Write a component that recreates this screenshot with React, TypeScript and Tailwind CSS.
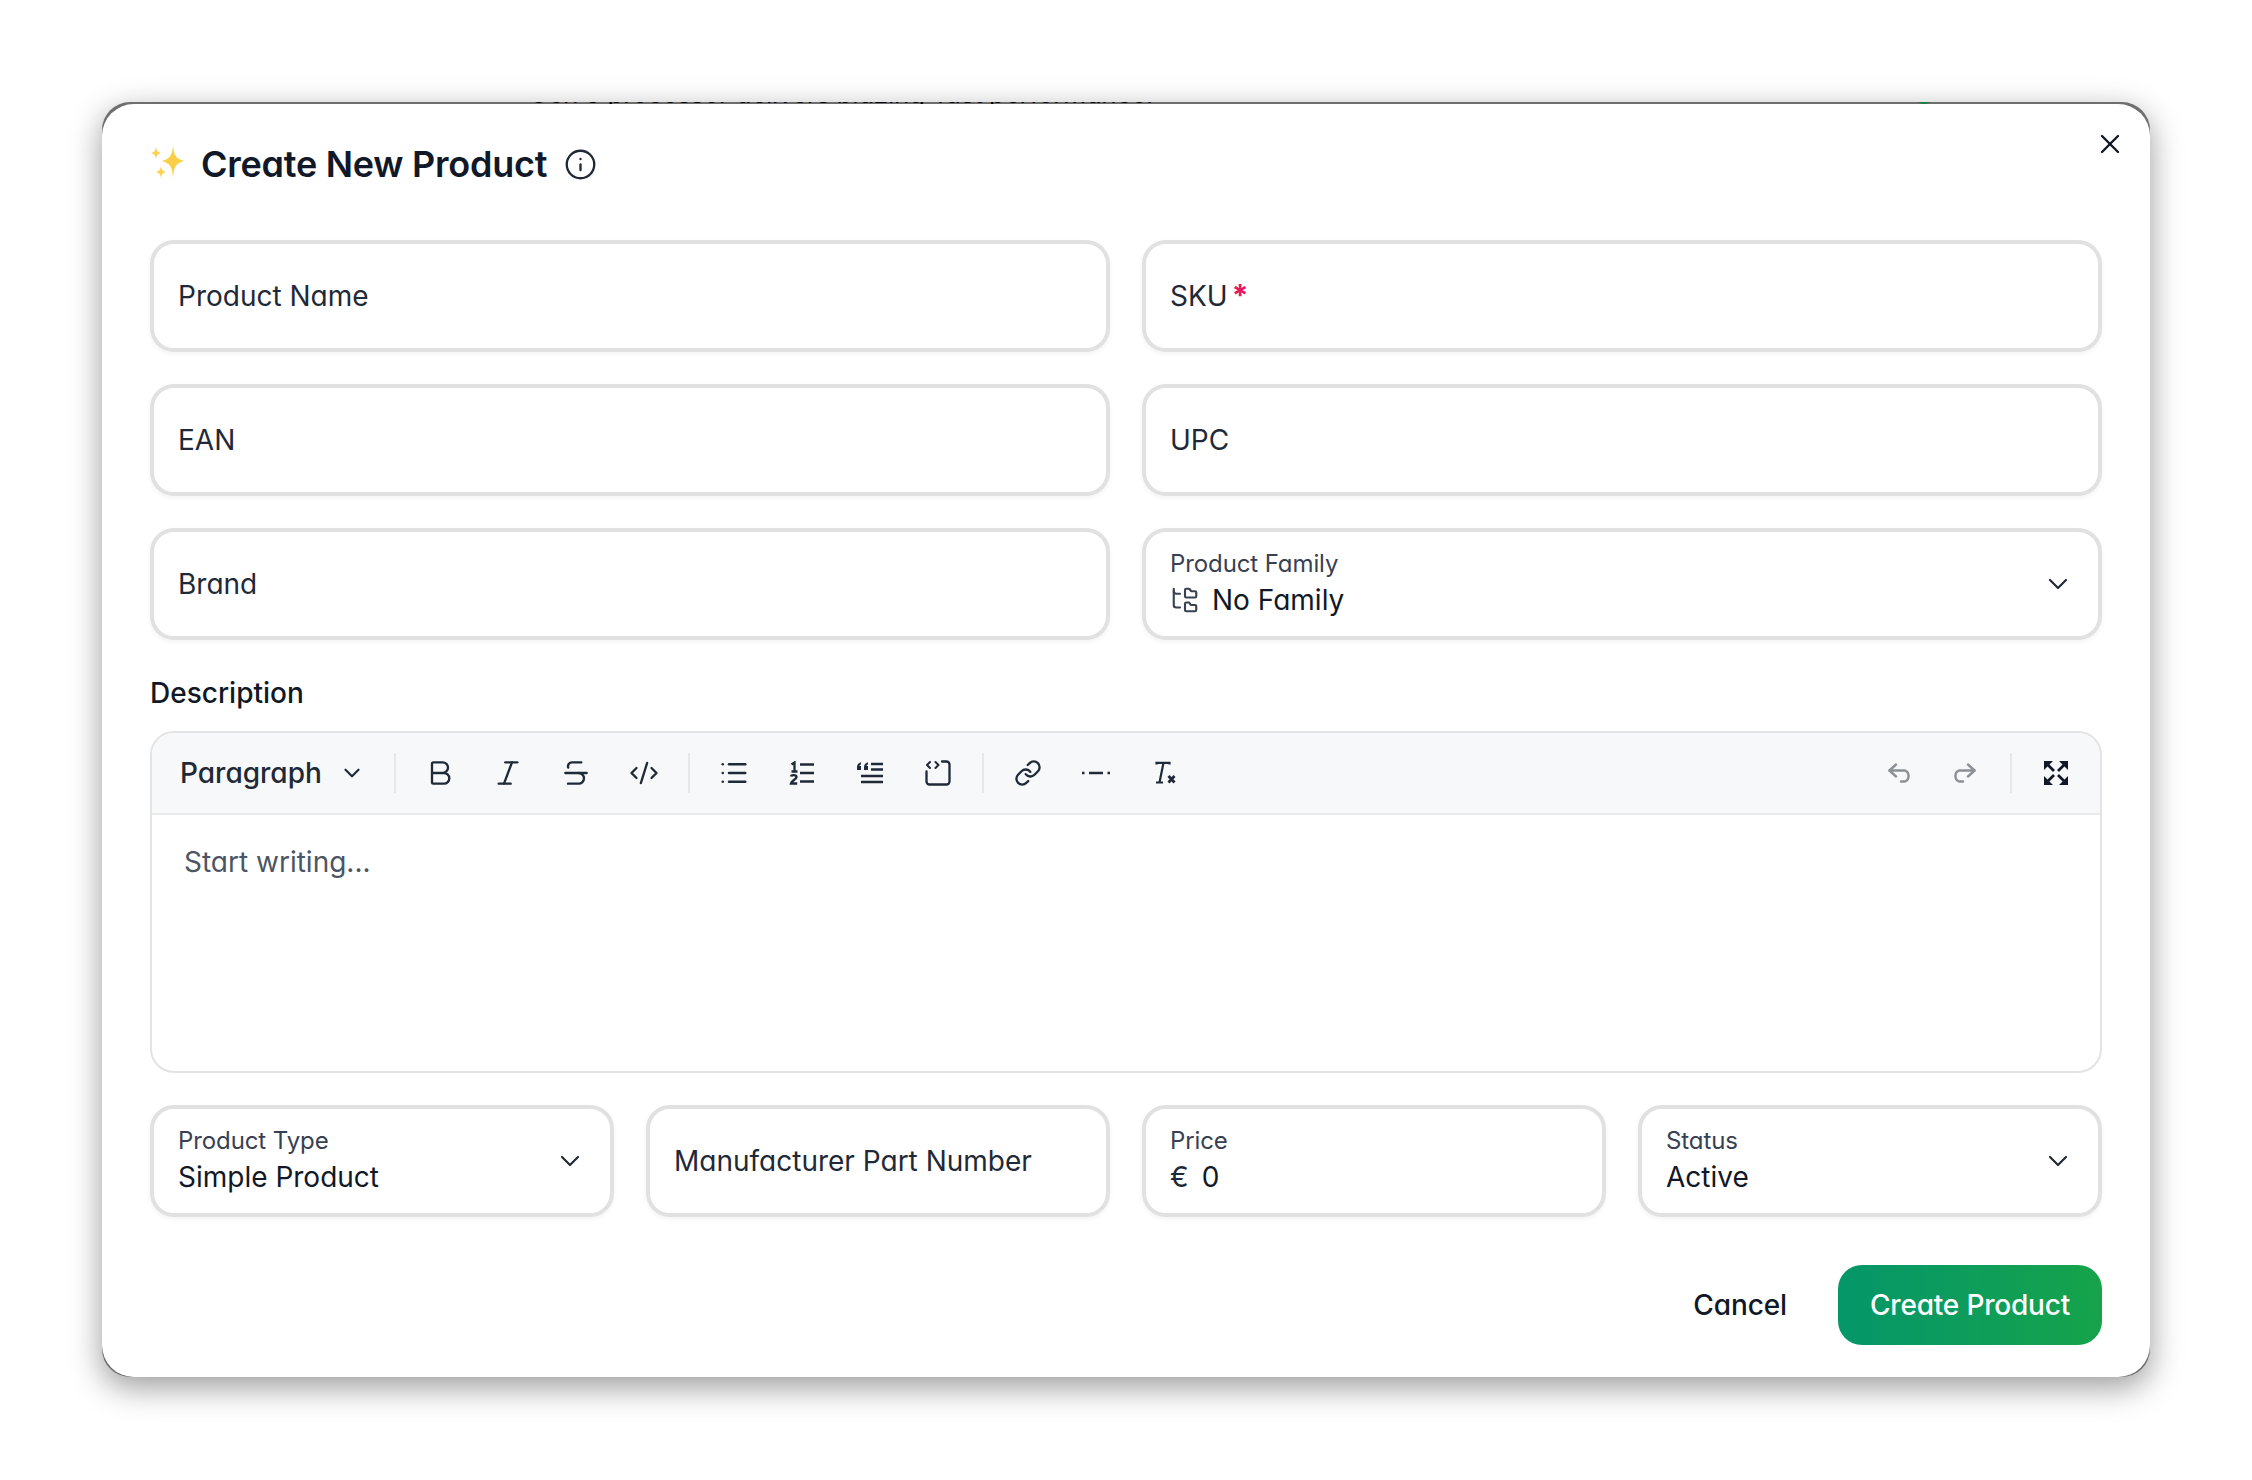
import React from "react";
import { X, Info, ChevronDown, FolderTree, Bold, Italic, Strikethrough, CodeXml, List, Link } from "lucide-react";

function Plain({ label, star }: { label: string; star?: boolean }) {
  return (
    <div className="h-[112px] rounded-[24px] border-4 border-[#e1e1e1] bg-white px-[24px] flex items-center shadow-[0_2px_5px_rgba(0,0,0,0.05)]">
      <span className="text-[28px] leading-[40px] text-[#1f2937]">{label}</span>
      {star ? <span className="ml-[4px] -mt-[3px] text-[30px] leading-[40px] font-bold text-[#e8175d]">*</span> : null}
    </div>
  );
}

function Floating({ label, children, chevron }: { label: string; children: React.ReactNode; chevron?: boolean }) {
  return (
    <div className="h-[112px] rounded-[24px] border-4 border-[#e1e1e1] bg-white pl-[24px] pr-[24px] flex items-center justify-between shadow-[0_2px_5px_rgba(0,0,0,0.05)]">
      <div className="flex flex-col">
        <span className="text-[24px] leading-[32px] text-[#374151] tracking-[-0.1px]">{label}</span>
        <div className="flex items-center text-[28px] leading-[40px] text-[#111827]">{children}</div>
      </div>
      {chevron ? <ChevronDown size={32} strokeWidth={1.6} className="text-[#1f2937]" /> : null}
    </div>
  );
}

function Tool({ children }: { children: React.ReactNode }) {
  return <div className="w-[52px] h-[52px] flex items-center justify-center text-[#1f2937]">{children}</div>;
}

function Divider() {
  return <div className="w-[2px] h-[40px] bg-[#e7e8ea] mx-[2px]" />;
}

function Sparkles() {
  return (
    <svg width="36" height="36" viewBox="0 0 36 36" className="shrink-0">
      <path d="M23 -1 C23.800 9 25.500 12.500 34 15 C25.500 17.500 23.800 21 23 32 C22.200 21 20.500 17.500 12 15 C20.500 12.500 22.200 9 23 -1Z" fill="#fbcf45" />
      <path d="M6 0 C6.300 4 7.200 6 11 7 C7.200 8 6.300 10 6 14 C5.700 10 4.800 8 1 7 C4.800 6 5.700 4 6 0Z" fill="#fcd155" />
      <path d="M11 19 C11.300 23 12.200 25 16 26 C12.200 27 11.300 29 11 33 C10.700 29 9.800 27 6 26 C9.800 25 10.700 23 11 19Z" fill="#fcd155" />
    </svg>
  );
}

function OrderedIcon() {
  return (
    <svg width="26" height="24" viewBox="0 0 26 24" fill="none" stroke="currentColor" strokeWidth="2.400">
      <path d="M11 3.500h14M11 12h14M11 20.500h14" />
      <path d="M2.500 3.500 5.500 1.500V10.500M2.500 10.500h6" strokeWidth="2.300" />
      <path d="M2 15.500c.4-1.800 5.300-2 5.500.6.200 2-4.800 3.400-5.500 6.400h6.200" strokeWidth="2.400" />
    </svg>
  );
}

function QuoteIcon() {
  return (
    <svg width="28" height="24" viewBox="0 0 28 24" fill="none">
      <path d="M1 6.500C1 3.500 2.500 2 5 1.200v2C4 3.700 3.500 4.300 3.500 5H5v4H1Z M8 6.500C8 3.500 9.500 2 12 1.200v2c-1 .5-1.500 1.100-1.500 1.800H12v4H8Z" fill="currentColor" />
      <path d="M15 3h12M15 8.500h12M5 15h22M5 21h22" stroke="currentColor" strokeWidth="2.400" />
    </svg>
  );
}

function CodeBlockIcon() {
  return (
    <svg width="26" height="26" viewBox="0 0 26 26" fill="none" stroke="currentColor" strokeWidth="2.300" strokeLinecap="round" strokeLinejoin="round">
      <path d="M17 1.500h4.500a3 3 0 0 1 3 3v17a3 3 0 0 1-3 3h-17a3 3 0 0 1-3-3v-10" />
      <path d="M5 2 2 5l3 3M10.500 2l3 3-3 3" strokeWidth="2" />
    </svg>
  );
}

function RuleIcon() {
  return (
    <svg width="28" height="6" viewBox="0 0 28 6" fill="none" stroke="currentColor" strokeWidth="2.400">
      <path d="M0 3h2.500M7 3h14M25.500 3H28" />
    </svg>
  );
}

function ClearIcon() {
  return (
    <svg width="24" height="24" viewBox="0 0 24 24" fill="none" stroke="currentColor" strokeWidth="2.200" className="translate-x-[1px]">
      <path d="M3.500 3.500V1.800H16.500v1.700M10.500 1.800 6.500 21.500M3 21.500h7" />
      <path d="M15.500 15l6 6.500M21.500 15l-6 6.500" strokeWidth="2.800" />
    </svg>
  );
}

function UndoIcon({ flip }: { flip?: boolean }) {
  return (
    <svg width="26" height="20" viewBox="0 0 26 20" fill="none" stroke="#8b8f96" strokeWidth="2.400" strokeLinecap="round" strokeLinejoin="round" className={flip ? "-scale-x-100 -translate-x-[3px]" : "translate-x-[3px]"}>
      <path d="M8 1.500 1.500 7.500 8 13.500" />
      <path d="M1.500 7.500H17a6 6 0 0 1 0 11h-4" />
    </svg>
  );
}

function FullIcon() {
  return (
    <svg width="26" height="26" viewBox="0 0 26 26" fill="none">
      <path d="M1 1h9L1 10Z M25 1h-9l9 9Z M1 25h9l-9-9Z M25 25h-9l9-9Z" fill="#111827" />
      <path d="M4 4l7 7M22 4l-7 7M4 22l7-7M22 22l-7-7" stroke="#111827" strokeWidth="2.800" />
    </svg>
  );
}

export default function App() {
  return (
    <div className="w-[2252px] h-[1480px] bg-white flex items-start justify-center pt-[102px] [font-family:Inter,'Noto_Sans',sans-serif] [font-feature-settings:'cv11'] overflow-hidden">
      <div className="relative w-[2048px] h-[1275px] rounded-[28px] bg-[#6e6e6e] pt-[2px] overflow-hidden shadow-[0_10px_32px_rgba(0,0,0,0.4)]">
        <span className="absolute left-[427px] top-[-28px] text-[26px] leading-[40px] tracking-[-0.3px] text-black whitespace-nowrap">Gen 5 processor delivers blazing-fast performance.</span>
        <span className="absolute left-[1812px] top-[-18px] w-[20px] h-[20px] rounded-full bg-[#15803d]" />
        <div className="relative h-[1273px] rounded-[32px] bg-white px-[48px] pt-[40px]">
          <button className="absolute right-[24px] top-[24px] text-[#111827]">
            <X size={32} strokeWidth={1.8} />
          </button>

          <div className="h-[40px] mb-[56px] flex items-center">
            <Sparkles />
            <h2 className="ml-[15px] -mt-[1px] text-[36px] leading-[40px] font-semibold text-[#111827] tracking-[-0.25px]">Create New Product</h2>
            <Info size={33} strokeWidth={1.7} className="ml-[17px] text-[#1f2937]" />
          </div>

          <div className="grid grid-cols-2 gap-[32px]">
            <Plain label="Product Name" />
            <Plain label="SKU" star />
            <Plain label="EAN" />
            <Plain label="UPC" />
            <Plain label="Brand" />
            <Floating label="Product Family" chevron>
              <FolderTree size={30} strokeWidth={1.7} className="text-[#374151] mr-[12px]" />
              <span>No Family</span>
            </Floating>
          </div>

          <div className="mt-[33px] mb-[18px] text-[28px] leading-[40px] font-medium text-[#111827]">Description</div>

          <div className="h-[342px] rounded-[24px] border-2 border-[#e3e3e3] overflow-hidden">
            <div className="h-[82px] bg-[#f7f8f9] border-b-2 border-[#e9eaec] flex items-center pl-[18px] pr-[18px] gap-[16px]">
              <div className="w-[206px] pl-[10px] flex items-center text-[#1f2937]">
                <span className="text-[28px] leading-[40px] font-medium">Paragraph</span>
                <ChevronDown size={26} strokeWidth={2} className="ml-[17px]" />
              </div>
              <Divider />
              <Tool><Bold size={32} strokeWidth={1.75} /></Tool>
              <Tool><Italic size={32} strokeWidth={1.75} /></Tool>
              <Tool><Strikethrough size={32} strokeWidth={1.75} /></Tool>
              <Tool><CodeXml size={30} strokeWidth={1.9} /></Tool>
              <Divider />
              <Tool><List size={30} strokeWidth={2} /></Tool>
              <Tool><OrderedIcon /></Tool>
              <Tool><QuoteIcon /></Tool>
              <Tool><CodeBlockIcon /></Tool>
              <Divider />
              <Tool><Link size={28} strokeWidth={2} /></Tool>
              <Tool><RuleIcon /></Tool>
              <Tool><ClearIcon /></Tool>
              <div className="flex-1" />
              <Tool><UndoIcon /></Tool>
              <Tool><UndoIcon flip /></Tool>
              <Divider />
              <Tool><FullIcon /></Tool>
            </div>
            <div className="px-[32px] pt-[25px] text-[28px] leading-[44px] text-[#4b5563]">Start writing...</div>
          </div>

          <div className="mt-[32px] grid grid-cols-4 gap-[32px]">
            <Floating label="Product Type" chevron>Simple Product</Floating>
            <Plain label="Manufacturer Part Number" />
            <Floating label="Price">
              <span className="text-[#1f2937]">€</span>
              <span className="ml-[13px]">0</span>
            </Floating>
            <Floating label="Status" chevron>Active</Floating>
          </div>

          <div className="mt-[48px] flex justify-end items-center">
            <button className="px-[32px] mr-[19px] text-[28px] leading-[40px] font-medium tracking-[-0.1px] text-[#111827]">Cancel</button>
            <button className="h-[80px] px-[32px] rounded-[24px] bg-gradient-to-r from-[#059669] to-[#16a34a] text-white text-[28px] leading-[40px] font-medium tracking-[-0.2px]">Create Product</button>
          </div>
        </div>
      </div>
    </div>
  );
}
